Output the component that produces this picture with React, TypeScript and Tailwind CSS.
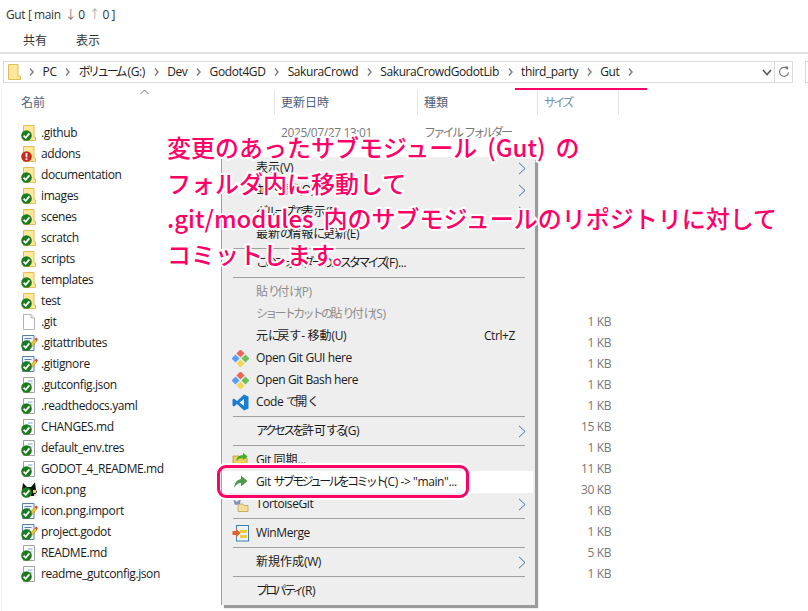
import React from "react";

/* Meiryo-UI style text: kana are condensed, kanji keep their full width, latin is slightly tight. */
const K = ({ t }: { t: string }) => (
  <>
    {t.split(/([\u3040-\u30ff]+|[\u4e00-\u9fff]+)/).filter(Boolean).map((run, i) => {
      if (/^[\u3040-\u30ff]/.test(run)) return <span key={i} className="tracking-[-2.7px]">{run}</span>;
      if (/^[\u4e00-\u9fff]/.test(run)) return <span key={i} className="tracking-normal">{run}</span>;
      return <span key={i}>{run}</span>;
    })}
  </>
);

const Check = () => (
  <svg className="absolute left-0 bottom-0" width="11" height="11" viewBox="0 0 11 11">
    <circle cx="5.5" cy="5.5" r="5.3" fill="#1f7a1f" />
    <path d="M2.6 5.6 L4.7 7.8 L8.4 3.4" fill="none" stroke="#fff" strokeWidth="1.7" />
  </svg>
);

const Alert = () => (
  <svg className="absolute left-0 bottom-0" width="11" height="11" viewBox="0 0 11 11">
    <circle cx="5.5" cy="5.5" r="5.3" fill="#c8281e" />
    <rect x="4.6" y="2" width="1.8" height="4.4" fill="#fff" />
    <rect x="4.6" y="7.4" width="1.8" height="1.7" fill="#fff" />
  </svg>
);

const Folder = ({ alert }: { alert?: boolean }) => (
  <span className="relative block w-[16px] h-[16px] shrink-0">
    <svg className="absolute left-[2px] top-0" width="13" height="16" viewBox="0 0 13 16">
      <path d="M0.5 0.5H11V12H12.5V15.5H0.5Z" fill="#ffe89a" stroke="#e3bd58" />
    </svg>
    {alert ? <Alert /> : <Check />}
  </span>
);

const PlainFile = () => (
  <span className="block w-[16px] h-[16px] shrink-0">
    <svg width="16" height="16" viewBox="0 0 16 16">
      <path d="M2.5 0.5H10L13.5 4V15.5H2.5Z" fill="#fff" stroke="#b4b4b4" />
      <path d="M10 0.5V4H13.5" fill="#f0f0f0" stroke="#b4b4b4" />
    </svg>
  </span>
);

const TextFile = () => (
  <span className="relative block w-[16px] h-[16px] shrink-0">
    <svg className="absolute left-0 top-0" width="16" height="16" viewBox="0 0 16 16">
      <path d="M2.5 0.5H13.5V15.5H2.5Z" fill="#fff" stroke="#a2a2a2" />
      <path d="M7 4H11.5M8 7H11.5" stroke="#7fa6cc" />
    </svg>
    <Check />
  </span>
);

const EditFile = () => (
  <span className="relative block w-[16px] h-[16px] shrink-0">
    <svg className="absolute left-0 top-0" width="17" height="16" viewBox="0 0 17 16">
      <path d="M1.5 0.5H13V15.5H1.5Z" fill="#eef3fa" stroke="#5c7fa6" />
      <path d="M3.5 3.5H10.5M3.5 6H9" stroke="#5c7fa6" />
      <path d="M8 11 L14 4 L16 6 L10 12.5Z" fill="#f2c230" stroke="#a8802a" strokeWidth="0.5" />
      <path d="M14 4 L15 2.4 L16.8 4 L16 6Z" fill="#d8332a" />
    </svg>
    <Check />
  </span>
);

const CatIcon = () => (
  <span className="relative block w-[16px] h-[16px] shrink-0">
    <svg className="absolute left-0 top-0" width="17" height="16" viewBox="0 0 17 16">
      <path d="M2 1 L6 5 H10 L14 0.5 L15 8 L16 10 L13 14 H4 L1 8Z" fill="#111" />
      <rect x="12" y="8" width="3" height="3" fill="#f2d24a" />
      <rect x="13" y="12" width="3" height="1.6" fill="#ddd" />
    </svg>
    <Check />
  </span>
);

type Kind = "folder" | "alert" | "plain" | "text" | "edit" | "cat";

const files: { name: string; kind: Kind; size?: string }[] = [
  { name: ".github", kind: "folder" },
  { name: "addons", kind: "alert" },
  { name: "documentation", kind: "folder" },
  { name: "images", kind: "folder" },
  { name: "scenes", kind: "folder" },
  { name: "scratch", kind: "folder" },
  { name: "scripts", kind: "folder" },
  { name: "templates", kind: "folder" },
  { name: "test", kind: "folder" },
  { name: ".git", kind: "plain", size: "1 KB" },
  { name: ".gitattributes", kind: "edit", size: "1 KB" },
  { name: ".gitignore", kind: "edit", size: "1 KB" },
  { name: ".gutconfig.json", kind: "text", size: "1 KB" },
  { name: ".readthedocs.yaml", kind: "text", size: "1 KB" },
  { name: "CHANGES.md", kind: "text", size: "15 KB" },
  { name: "default_env.tres", kind: "text", size: "1 KB" },
  { name: "GODOT_4_README.md", kind: "text", size: "11 KB" },
  { name: "icon.png", kind: "cat", size: "30 KB" },
  { name: "icon.png.import", kind: "edit", size: "1 KB" },
  { name: "project.godot", kind: "edit", size: "1 KB" },
  { name: "README.md", kind: "text", size: "5 KB" },
  { name: "readme_gutconfig.json", kind: "text", size: "1 KB" },
];

const FileIcon = ({ kind }: { kind: Kind }) => {
  if (kind === "folder") return <Folder />;
  if (kind === "alert") return <Folder alert />;
  if (kind === "plain") return <PlainFile />;
  if (kind === "edit") return <EditFile />;
  if (kind === "cat") return <CatIcon />;
  return <TextFile />;
};

const crumbs = ["PC", "ボリューム (G:)", "Dev", "Godot4GD", "SakuraCrowd", "SakuraCrowdGodotLib", "third_party", "Gut"];

const Sep = () => (
  <svg className="shrink-0" width="5" height="8" viewBox="0 0 5 8">
    <path d="M1 0.5 L4 4 L1 7.5" fill="none" stroke="#808080" strokeWidth="1.5" />
  </svg>
);

const GitIcon = () => (
  <svg width="17" height="17" viewBox="0 0 17 17">
    <rect x="5.6" y="0.6" width="5.8" height="5.8" transform="rotate(45 8.5 3.5)" fill="#e8685a" />
    <rect x="0.6" y="5.6" width="5.8" height="5.8" transform="rotate(45 3.5 8.5)" fill="#5a9ff0" />
    <rect x="10.6" y="5.6" width="5.8" height="5.8" transform="rotate(45 13.5 8.5)" fill="#6cc25a" />
    <rect x="5.6" y="10.6" width="5.8" height="5.8" transform="rotate(45 8.5 13.5)" fill="#f3d65c" />
  </svg>
);

const CodeIcon = () => (
  <svg width="17" height="17" viewBox="0 0 17 17">
    <path d="M12 0.5 L16.5 2.5 V14.5 L12 16.5 L5 10 L2 12.5 L0.5 11.5 V5.5 L2 4.5 L5 7Z M12 5 L7.5 8.5 L12 12Z" fill="#1a7fd0" fillRule="evenodd" />
  </svg>
);

const SyncIcon = () => (
  <svg width="17" height="17" viewBox="0 0 17 17">
    <path d="M1 4H7L8 6H15V15H1Z" fill="#f0cf5a" stroke="#a98a2a" strokeWidth="0.7" />
    <path d="M4 9 Q5 3 11 3 V0.8 L15.5 4.5 L11 8 V5.8 Q7 6 4 9Z" fill="#3fae2a" />
  </svg>
);

const CommitIcon = () => (
  <svg width="17" height="17" viewBox="0 0 17 17">
    <path d="M2 14 Q2.5 6 9 5 V1.5 L15.5 7 L9 12.5 V9 Q5 9 2 14Z" fill="#4f9a4a" />
  </svg>
);

const TortoiseIcon = () => (
  <svg width="17" height="17" viewBox="0 0 17 17">
    <path d="M6 8H11L12 9.5H16V15.5H6Z" fill="#f3df9a" stroke="#b59a4a" strokeWidth="0.7" />
    <path d="M1 3 L5 6 L9 2 L8 8 L3 9Z" fill="#7c93b5" />
  </svg>
);

const WinMergeIcon = () => (
  <svg width="17" height="17" viewBox="0 0 17 17">
    <rect x="4.5" y="0.5" width="12" height="15.5" fill="#eaf3fb" stroke="#3f7fb0" />
    <rect x="8" y="5" width="7" height="3" fill="#f2c84a" />
    <rect x="8" y="10" width="7" height="3" fill="#f2c84a" />
    <path d="M0.5 6H4V3.5L8.5 8L4 12.5V10H0.5Z" fill="#d8652a" />
  </svg>
);

const MenuArrow = () => (
  <svg className="absolute right-[9px] top-[5px]" width="8" height="13" viewBox="0 0 8 13">
    <path d="M1 0.8 L7 6.5 L1 12.2" fill="none" stroke="#3f6f9f" strokeWidth="1" />
  </svg>
);

const MenuSep = () => <div className="h-[7px] flex items-center pl-[11px] pr-[10px]"><div className="h-px w-full bg-[#a0a0a0]" /></div>;

const MenuItem = ({
  label, icon, arrow, shortcut, disabled, active,
}: { label: string; icon?: React.ReactNode; arrow?: boolean; shortcut?: string; disabled?: boolean; active?: boolean }) => (
  <div className={`relative flex items-center h-[22px] ${active ? "bg-white mr-[2px]" : ""}`}>
    <span className="w-[34px] pl-[10px] shrink-0 flex items-center">{icon}</span>
    <span className={disabled ? "text-[#8c8c8c]" : "text-[#1a1a1a]"}><K t={label} /></span>
    {shortcut && <span className="absolute right-[20px] text-[#1a1a1a]">{shortcut}</span>}
    {arrow && <MenuArrow />}
  </div>
);

export default function App() {
  return (
    <div className="relative w-[808px] h-[611px] overflow-hidden bg-white text-[12px] tracking-[-0.4px] text-[#1a1a1a] font-['Open_Sans','Noto_Sans_CJK_JP',sans-serif]">
      <div className="h-[30px] pl-[6px] flex items-center gap-[2px] text-[#333333]">
        <span>Gut [ main</span>
        <span className="text-[#777777] ml-[2px]">↓</span>
        <span>0</span>
        <span className="text-[#aaaaaa] ml-[2px]">↑</span>
        <span>0 ]</span>
      </div>
      <div className="h-[24px] flex items-center pl-[23px] gap-[29px] text-[#333333] border-b-2 border-[#e2e2e2]">
        <span className="tracking-normal">共有</span>
        <span className="tracking-normal">表示</span>
      </div>
      <div className="h-[7px]" />
      <div className="flex items-center h-[22px] pl-[3px]">
        <div className="flex items-center w-[772px] shrink-0 h-[22px] border border-[#d9d9d9] pl-[4px] pr-[2px]">
          <svg className="shrink-0" width="13" height="16" viewBox="0 0 13 16">
            <path d="M0.5 0.5H10V12H12.5V15.5H0.5Z" fill="#ffe89a" stroke="#e3bd58" />
          </svg>
          <div className="flex items-center flex-1 ml-[8px] gap-[8.6px] text-[#222222] whitespace-nowrap">
            {crumbs.map((c) => (
              <React.Fragment key={c}>
                <Sep />
                <span><K t={c} /></span>
              </React.Fragment>
            ))}
            <Sep />
          </div>
          <svg className="shrink-0" width="10" height="7" viewBox="0 0 10 7">
            <path d="M1 1 L5 5.5 L9 1" fill="none" stroke="#555" strokeWidth="1.5" />
          </svg>
        </div>
        <div className="w-[18px] h-[22px] shrink-0 border border-l-0 border-[#d9d9d9] flex items-center justify-center">
          <svg width="12" height="12" viewBox="0 0 12 12">
            <path d="M9.5 3 A4.5 4.5 0 1 0 10.5 6.5" fill="none" stroke="#777" strokeWidth="1.2" />
            <path d="M6.5 0.5 H10 V4Z" fill="#777" />
          </svg>
        </div>
        <div className="ml-[12px] w-[10px] h-[22px] border border-[#d9d9d9] shrink-0" />
      </div>

      <div className="flex h-[25px] mt-[7px] text-[#4c607a]">
        <div className="w-[275px] pl-[21px] flex items-center border-r border-[#e5e5e5]"><K t="名前" /></div>
        <div className="w-[143px] pl-[6px] flex items-center border-r border-[#e5e5e5]"><K t="更新日時" /></div>
        <div className="w-[120px] pl-[6px] flex items-center border-r border-[#e5e5e5]"><K t="種類" /></div>
        <div className="w-[81px] pl-[6px] flex items-center border-r border-[#e5e5e5] text-[#6f8fb0]"><K t="サイズ" /></div>
      </div>

      <div className="mt-[7px] flex flex-col">
        {files.map((f, i) => (
          <div key={f.name} className="flex h-[21px] items-center text-[#1a1a1a]">
            <div className="w-[275px] pl-[21px] flex items-center gap-[4px]">
              <FileIcon kind={f.kind} />
              <span>{f.name}</span>
            </div>
            <div className="w-[143px] pl-[6px] text-[#777777]">{i === 0 ? "2025/07/27 13:01" : ""}</div>
            <div className="w-[120px] pl-[6px] text-[#777777]">{i === 0 ? <K t="ファイル フォルダー" /> : ""}</div>
            <div className="w-[73px] text-right text-[#777777]">{f.size}</div>
          </div>
        ))}
      </div>

      {/* navigation pane edge */}
      <div className="absolute left-[1px] top-[88px] bottom-0 w-px bg-[#f0f0f0]" />

      {/* sort caret */}
      <svg className="absolute left-[140px] top-[89px]" width="9" height="6" viewBox="0 0 9 6">
        <path d="M0.5 5 L4.5 1 L8.5 5" fill="none" stroke="#777" />
      </svg>

      {/* underline annotation */}
      <div className="absolute left-[515px] top-[88px] w-[132px] h-[2px] bg-[#ff0066]" />

      {/* context menu */}
      <div className="absolute left-[221px] top-[157px] w-[314px] h-[448px] bg-[#eeeeee] border-l border-[#a0a0a0] shadow-[3px_3px_1px_#9a9a9a] whitespace-nowrap">
        <MenuItem label="表示(V)" arrow />
        <MenuItem label="並べ替え(O)" arrow />
        <MenuItem label="グループで表示(P)" arrow />
        <MenuItem label="最新の情報に更新(E)" />
        <MenuSep />
        <MenuItem label="このフォルダーのカスタマイズ(F)..." />
        <MenuSep />
        <MenuItem label="貼り付け(P)" disabled />
        <MenuItem label="ショートカットの貼り付け(S)" disabled />
        <MenuItem label="元に戻す - 移動(U)" shortcut="Ctrl+Z" />
        <MenuItem label="Open Git GUI here" icon={<GitIcon />} />
        <MenuItem label="Open Git Bash here" icon={<GitIcon />} />
        <MenuItem label="Code で開く" icon={<CodeIcon />} />
        <MenuSep />
        <MenuItem label="アクセスを許可する(G)" arrow />
        <MenuSep />
        <MenuItem label="Git 同期..." icon={<SyncIcon />} />
        <MenuItem label={'Git サブモジュールをコミット(C) -> "main"...'} icon={<CommitIcon />} active />
        <MenuItem label="TortoiseGit" icon={<TortoiseIcon />} arrow />
        <MenuSep />
        <MenuItem label="WinMerge" icon={<WinMergeIcon />} />
        <MenuSep />
        <MenuItem label="新規作成(W)" arrow />
        <MenuSep />
        <MenuItem label="プロパティ(R)" />
      </div>

      {/* highlight ring */}
      <div className="absolute left-[217px] top-[465px] w-[252px] h-[33px] rounded-[9px] border-[3px] border-[#ff0066] shadow-[0_0_0_2px_#ffffff]" />

      {/* annotation text */}
      <div className="absolute left-[167px] top-[129px] text-[24px] tracking-normal [word-spacing:4.5px] leading-[35.7px] font-medium text-[#ff0066] whitespace-nowrap font-['Noto_Sans_CJK_JP',sans-serif] [-webkit-text-stroke:4px_#ffffff] [paint-order:stroke_fill]">
        <div>変更のあったサブモジュール (Gut) の</div>
        <div>フォルダ内に移動して</div>
        <div>.git/modules 内のサブモジュールのリポジトリに対して</div>
        <div>コミットします。</div>
      </div>
    </div>
  );
}
